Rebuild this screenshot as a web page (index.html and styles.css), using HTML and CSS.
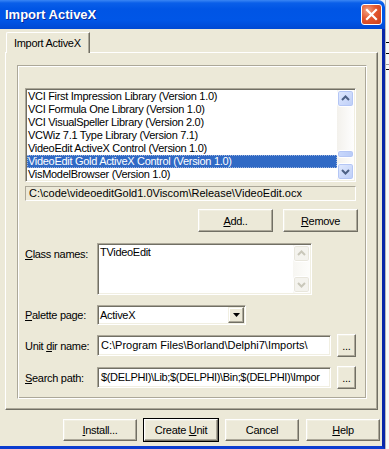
FILE: index.html
```html
<!DOCTYPE html>
<html lang="en">
<head>
  <meta charset="UTF-8" />
  <title>Import ActiveX</title>
  <link rel="stylesheet" href="styles.css">
</head>
<body>
  <div class="window">
    <div class="titlebar">
      <span class="caption">Import ActiveX</span>
      <div class="close">
        <svg width="13" height="13" viewBox="0 0 13 13"><path d="M2 2 L11 11 M11 2 L2 11" stroke="#fff" stroke-width="2.2" stroke-linecap="square"/></svg>
      </div>
    </div>

    <div class="client">
      <div class="tabs">
        <div class="tab">Import ActiveX</div>
      </div>

      <div class="page">
        <div class="group">

          <!-- installed controls -->
          <div class="listbox sunken">
            <ul class="items">
              <li>VCI First Impression Library (Version 1.0)</li>
              <li>VCI Formula One Library (Version 1.0)</li>
              <li>VCI VisualSpeller Library (Version 2.0)</li>
              <li>VCWiz 7.1 Type Library (Version 7.1)</li>
              <li>VideoEdit ActiveX Control (Version 1.0)</li>
              <li class="selected">VideoEdit Gold ActiveX Control (Version 1.0)</li>
              <li>VisModelBrowser (Version 1.0)</li>
            </ul>
            <div class="vscroll">
              <div class="sb-btn">
                <svg width="15" height="15" viewBox="0 0 15 15"><path d="M4 9 L7.5 5.5 L11 9" fill="none" stroke="#4d6185" stroke-width="2"/></svg>
              </div>
              <div class="sb-track">
                <div class="sb-thumb"></div>
              </div>
              <div class="sb-btn">
                <svg width="15" height="15" viewBox="0 0 15 15"><path d="M4 6 L7.5 9.5 L11 6" fill="none" stroke="#4d6185" stroke-width="2"/></svg>
              </div>
            </div>
          </div>

          <div class="path">C:\code\videoeditGold1.0Viscom\Release\VideoEdit.ocx</div>

          <div class="btn-row">
            <button class="btn"><u>A</u>dd..</button>
            <button class="btn"><u>R</u>emove</button>
          </div>

          <div class="field memo-row">
            <label><u>C</u>lass names:</label>
            <div class="memo sunken">
              <div class="memo-text">TVideoEdit</div>
              <div class="vscroll disabled">
                <div class="sb-btn">
                  <svg width="15" height="15" viewBox="0 0 15 15"><path d="M4 9 L7.5 5.5 L11 9" fill="none" stroke="#c9c7ba" stroke-width="2"/></svg>
                </div>
                <div class="sb-track"></div>
                <div class="sb-btn">
                  <svg width="15" height="15" viewBox="0 0 15 15"><path d="M4 6 L7.5 9.5 L11 6" fill="none" stroke="#c9c7ba" stroke-width="2"/></svg>
                </div>
              </div>
            </div>
          </div>

          <div class="field combo-row">
            <label><u>P</u>alette page:</label>
            <div class="combo sunken">
              <span class="combo-text">ActiveX</span>
              <div class="combo-btn">
                <svg width="7" height="4" viewBox="0 0 7 4"><path d="M0 0 H7 L3.5 4 Z" fill="#000"/></svg>
              </div>
            </div>
          </div>

          <div class="field edit-row">
            <label>Unit <u>d</u>ir name:</label>
            <div class="edit sunken">C:\Program Files\Borland\Delphi7\Imports\</div>
            <button class="btn dots">...</button>
          </div>

          <div class="field edit-row">
            <label><u>S</u>earch path:</label>
            <div class="edit sunken tight">$(DELPHI)\Lib;$(DELPHI)\Bin;$(DELPHI)\Impor</div>
            <button class="btn dots">...</button>
          </div>

        </div>
      </div>

      <div class="dlg-buttons">
        <button class="btn"><u>I</u>nstall...</button>
        <button class="btn default">Create <u>U</u>nit</button>
        <button class="btn">Cancel</button>
        <button class="btn"><u>H</u>elp</button>
      </div>
    </div>
  </div>

  <!-- part of the window behind the dialog -->
  <div class="behind">
    <div class="behind-top"></div>
    <div class="tick"></div>
    <div class="tick"></div>
    <div class="tick grey"></div>
    <div class="tick"></div>
  </div>
</body>
</html>
```

FILE: styles.css
```css
* {
  box-sizing: border-box;
}
html, body {
  margin: 0;
}
body {
  width: 389px;
  height: 449px;
  overflow: hidden;
  display: flex;
  background: #f4f4f4;
  font-family: "Liberation Sans", Arial, sans-serif;
  font-size: 11px;
  letter-spacing: -0.3px;
  color: #000;
}
u {
  text-decoration: underline;
  text-underline-offset: 1px;
}
.window {
  width: 385px;
  display: flex;
  flex-direction: column;
}

/* XP caption */
.titlebar {
  height: 29px;
  display: flex;
  align-items: center;
  justify-content: space-between;
  padding: 0 3px 0 5px;
  background: linear-gradient(#3a86f4, #0a5fe9 3px, #0055e5 9px, #0056e7 70%, #0049d3);
  border-top-right-radius: 7px;
}
.caption {
  color: #fff;
  font-weight: bold;
  font-size: 13px;
  letter-spacing: 0;
  text-shadow: 1px 1px #0a2a9a;
}
.close {
  width: 21px;
  height: 21px;
  border: 1px solid #fff;
  border-radius: 3px;
  background: radial-gradient(circle at 30% 30%, #f2a282, #e3562e 45%, #c9401c);
  display: flex;
  align-items: center;
  justify-content: center;
}

.client {
  flex: 1;
  background: #ece9d8;
  border-right: 3px solid #0a26a8;
  border-bottom: 3px solid #0b3ccf;
  display: flex;
  flex-direction: column;
}

/* tab control */
.tabs {
  display: flex;
  padding: 3px 0 0 6px;
}
.tab {
  position: relative;
  z-index: 1;
  width: 84px;
  height: 21px;
  margin-bottom: -1px;
  padding: 4px 0 0 7px;
  background: #ece9d8;
  border-top: 1px solid #fff;
  border-left: 1px solid #fff;
  border-right: 1px solid #716f64;
  box-shadow: inset -1px 0 #aca899;
  border-top-left-radius: 2px;
}
.page {
  width: 373px;
  height: 358px;
  margin-left: 5px;
  padding: 12px 10px 10px 11px;
  border-top: 1px solid #fff;
  border-left: 1px solid #fff;
  border-right: 1px solid #716f64;
  border-bottom: 1px solid #716f64;
  box-shadow: inset -1px -1px #aca899;
}
.group {
  height: 100%;
  padding: 22px 7px 0 7px;
  border: 1px solid;
  border-color: #aca899 #fff #fff #aca899;
  box-shadow: inset 1px 1px #fff, inset -1px -1px #aca899;
  display: flex;
  flex-direction: column;
}

/* classic sunken edge */
.sunken {
  background: #fff;
  border: 1px solid;
  border-color: #aca899 #fff #fff #aca899;
  box-shadow: inset 1px 1px #716f64, inset -1px -1px #f1efe2;
  padding: 1px;
}

.listbox {
  width: 331px;
  height: 94px;
  display: flex;
  overflow: hidden;
}
.items {
  flex: 1;
  list-style: none;
  margin: 0;
  padding: 0;
  overflow: hidden;
}
.items li {
  height: 13px;
  line-height: 13px;
  padding-left: 1px;
  white-space: nowrap;
}
.items li.selected {
  background: #316ac5;
  color: #fff;
  outline: 1px dotted #9fb4dc;
  outline-offset: -1px;
}

/* XP scrollbar */
.vscroll {
  width: 17px;
  display: flex;
  flex-direction: column;
  background: linear-gradient(90deg, #f3f1ec, #fefefe);
}
.sb-btn {
  height: 17px;
  flex: none;
  border: 1px solid #fff;
  border-radius: 3px;
  background: linear-gradient(135deg, #e1eafe, #bccdf7);
  box-shadow: inset 0 0 0 1px #b4c6f5;
  display: flex;
  align-items: center;
  justify-content: center;
}
.sb-track {
  flex: 1;
  display: flex;
  flex-direction: column;
  justify-content: flex-end;
  padding-bottom: 5px;
}
.sb-thumb {
  height: 8px;
  border: 1px solid #fff;
  border-radius: 3px;
  background: linear-gradient(90deg, #c9d8fc, #b8cbf7);
  box-shadow: inset 0 0 0 1px #b4c6f5;
}
.vscroll.disabled .sb-btn {
  background: #f4f3ee;
  box-shadow: inset 0 0 0 1px #e8e6dc;
}

.path {
  width: 331px;
  height: 15px;
  margin-top: 4px;
  padding: 0 0 0 3px;
  line-height: 13px;
  letter-spacing: 0;
  border: 1px solid;
  border-color: #aca899 #fff #fff #aca899;
  white-space: nowrap;
}

/* raised button */
.btn {
  width: 75px;
  height: 23px;
  padding: 0;
  font-family: inherit;
  font-size: 11px;
  letter-spacing: inherit;
  color: #000;
  background: #ece9d8;
  border: 1px solid;
  border-color: #fff #716f64 #716f64 #fff;
  box-shadow: inset -1px -1px #aca899, inset 1px 1px #f1efe2;
}
.btn.default {
  outline: 1px solid #000;
}
.btn-row {
  display: flex;
  justify-content: flex-end;
  gap: 10px;
  margin-top: 8px;
  padding-right: 1px;
}

.field {
  display: flex;
  align-items: center;
}
.field label {
  width: 72px;
  flex: none;
}
.memo-row {
  margin-top: 11px;
  align-items: flex-start;
}
.memo-row label {
  padding-top: 5px;
}
.memo {
  width: 215px;
  height: 52px;
  display: flex;
}
.memo-text {
  flex: 1;
  padding: 1px 0 0 1px;
}
.memo .vscroll {
  background: linear-gradient(90deg, #f7f6f2, #fdfdfb);
}

.combo-row {
  margin-top: 10px;
}
.combo {
  width: 149px;
  height: 20px;
  display: flex;
  align-items: center;
}
.combo-text {
  flex: 1;
  padding-left: 1px;
}
.combo-btn {
  width: 16px;
  height: 16px;
  background: #ece9d8;
  border: 1px solid;
  border-color: #f1efe2 #716f64 #716f64 #f1efe2;
  box-shadow: inset -1px -1px #aca899, inset 1px 1px #fff;
  display: flex;
  align-items: center;
  justify-content: center;
}

.edit-row {
  margin-top: 9px;
}
.edit {
  width: 234px;
  height: 21px;
  padding: 3px 0 0 3px;
  letter-spacing: 0;
  white-space: nowrap;
  overflow: hidden;
}
.edit.tight {
  letter-spacing: -0.35px;
}
.btn.dots {
  width: 19px;
  height: 23px;
  margin-left: 6px;
}

/* OK / Cancel row */
.dlg-buttons {
  display: flex;
  gap: 7px;
  margin-top: 9px;
  padding-left: 63px;
}
.dlg-buttons .btn {
  width: 74px;
  height: 22px;
}

.behind {
  flex: 1;
  background: #fafafa;
  border-left: 1px solid #b8b8b8;
  display: flex;
  flex-direction: column;
}
.behind-top {
  height: 42px;
}
.tick {
  height: 1px;
  background: #000;
  margin-bottom: 10px;
}
.tick.grey {
  background: #9a9a9a;
  margin-bottom: 4px;
}
```
